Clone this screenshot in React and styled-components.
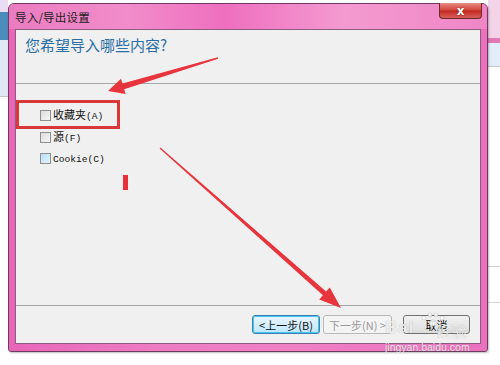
import React from "react";
import styled, { createGlobalStyle } from "styled-components";

const Global = createGlobalStyle`
  html, body { margin: 0; padding: 0; background: #fff; }
  body { font-family: "Noto Sans CJK SC", "Noto Sans", sans-serif; }
`;

const Desktop = styled.div`
  position: relative;
  width: 500px;
  height: 365px;
  overflow: hidden;
  box-sizing: border-box;
  padding: 3px 12px 13px 8px;
  background:
    linear-gradient(to bottom, #f3d3e8 0 38px, #e27ab8 38px 43px, #e3edf9 43px 66px, #c8c8c8 66px 67px, #fff 67px 266px, #d0d0d0 266px 267px, #fff 267px 302px, #d4d4d4 302px 303px, #fff 303px) right top / 12px 100% no-repeat,
    linear-gradient(to bottom, #eadcf2 0 12px, #4a8cbc 12px 40px, #dfe9f5 40px 96px, #c4c4c4 96px 97px, #fff 97px) left top / 8px 100% no-repeat,
    #fff;
`;

const Window = styled.div`
  width: 480px;
  height: 349px;
  box-sizing: border-box;
  border: 1px solid #6e3a62;
  border-radius: 6px 6px 3px 3px;
  background: linear-gradient(90deg, #e766b6 0%, #ee7cc2 30%, #f07fc4 60%, #ea72bd 100%);
  display: flex;
  flex-direction: column;
  box-shadow: 1px 1px 2px rgba(0,0,0,0.25);
`;

const TitleBar = styled.div`
  height: 25px;
  display: flex;
  align-items: center;
  justify-content: space-between;
  padding-left: 6px;
  background: linear-gradient(90deg, #ea7cc0 0%, #f28cca 25%, #ee6fbf 45%, #f49ad0 70%, #ef86c6 100%);
  border-radius: 5px 5px 0 0;
`;

const Title = styled.span`
  font-size: 11.5px;
  color: #1c1c1c;
  letter-spacing: 0.2px;
`;

const CloseButton = styled.div`
  align-self: flex-start;
  width: 43px;
  height: 16px;
  margin-right: 5px;
  margin-top: -1px;
  box-sizing: border-box;
  border: 1px solid #6a2a2a;
  border-top: none;
  border-radius: 0 0 4px 4px;
  background: linear-gradient(to bottom, #e88c84 0%, #d4483e 45%, #c02a22 55%, #d9605a 100%);
  display: flex;
  align-items: center;
  justify-content: center;
  color: #fff;
  font-family: "DejaVu Sans", sans-serif;
  font-weight: bold;
  font-size: 12px;
  line-height: 1;
  text-shadow: 0 0 2px #7a1010;
`;

const Client = styled.div`
  flex: 1;
  margin: 0 6px 7px 6px;
  border: 1px solid #8c5c7e;
  background: #f0f0f0;
  display: flex;
  flex-direction: column;
`;

const Header = styled.div`
  height: 54px;
  padding: 4px 0 0 9px;
  box-sizing: border-box;
  border-bottom: 1px solid #a8a8a8;
`;

const Heading = styled.div`
  font-size: 15px;
  color: #2a6ea5;
  line-height: 22px;
`;

const Body = styled.div`
  flex: 1;
  padding: 25px 0 0 24px;
  border-bottom: 1px solid #a4a4a4;
  display: flex;
  flex-direction: column;
  gap: 8.5px;
`;

const Row = styled.label`
  display: flex;
  align-items: center;
  gap: 2px;
  height: 13px;
`;

const Text = styled.span`
  font-size: 11px;
  line-height: 13px;
  color: #111;
  white-space: nowrap;
`;

const Box = styled.span`
  flex: none;
  width: 11px;
  height: 11px;
  box-sizing: border-box;
  border: 1px solid #8e8f8f;
  background: ${p => p.$tint ? "linear-gradient(135deg, #b8e0f4, #e4f4fc)" : "linear-gradient(135deg, #dcdcdc, #f6f6f6)"};
`;

const Latin = styled.span`
  font-family: "Liberation Mono", monospace;
  font-size: 9.6px;
`;

const Footer = styled.div`
  height: 37px;
  display: flex;
  align-items: center;
  justify-content: flex-end;
  padding-right: 10px;
  gap: 3px;
`;

const Button = styled.div`
  height: 19px;
  width: ${p => p.$w}px;
  margin-left: ${p => p.$ml || 0}px;
  box-sizing: border-box;
  border: 1px solid ${p => p.$focus ? "#3c7fb1" : p.$disabled ? "#b8b8b8" : "#707070"};
  border-radius: 3px;
  background: ${p => p.$focus
    ? "linear-gradient(to bottom, #eaf6fd, #bee6fd)"
    : p.$disabled ? "#f4f4f4" : "linear-gradient(to bottom, #f2f2f2, #dddddd)"};
  box-shadow: ${p => p.$focus ? "inset 0 0 0 1px #48c4f0" : "none"};
  display: flex;
  align-items: center;
  justify-content: center;
  font-size: 11px;
  color: ${p => p.$disabled ? "#9a9a9a" : "#111"};
`;

const Overlay = styled.svg`
  position: absolute;
  left: 0;
  top: 0;
  pointer-events: none;
`;

const Highlight = styled.div`
  position: absolute;
  left: 16px;
  top: 100px;
  width: 104px;
  height: 29px;
  box-sizing: border-box;
  border: 3px solid #d8383a;
`;

const Mark = styled.div`
  position: absolute;
  left: 123px;
  top: 175px;
  width: 5px;
  height: 15px;
  background: #e8303a;
`;

const Watermark = styled.div`
  position: absolute;
  left: ${p => p.$x}px;
  top: ${p => p.$y}px;
  font-size: ${p => p.$size}px;
  font-weight: ${p => p.$bold ? "bold" : "normal"};
  color: rgba(255,255,255,0.8);
  font-family: "Liberation Sans", "Noto Sans CJK SC", sans-serif;
  text-shadow: 0 0 1px rgba(110,110,110,0.55);
  white-space: nowrap;
  letter-spacing: ${p => p.$ls || 0}px;
`;

function arrowPoints(tx, ty, px, py, w0, w1, hl, hw) {
  const dx = px - tx, dy = py - ty;
  const len = Math.hypot(dx, dy);
  const ux = dx / len, uy = dy / len;
  const nx = -uy, ny = ux;
  const bx = px - ux * hl, by = py - uy * hl;
  const p = [
    [tx + nx * w0, ty + ny * w0],
    [bx + nx * w1, by + ny * w1],
    [bx + nx * hw, by + ny * hw],
    [px, py],
    [bx - nx * hw, by - ny * hw],
    [bx - nx * w1, by - ny * w1],
    [tx - nx * w0, ty - ny * w0],
  ];
  return p.map(q => q[0].toFixed(1) + "," + q[1].toFixed(1)).join(" ");
}

export default function App() {
  return (
    <>
      <Global />
      <Desktop>
        <Window>
          <TitleBar>
            <Title>导入/导出设置</Title>
            <CloseButton>x</CloseButton>
          </TitleBar>
          <Client>
            <Header>
              <Heading>您希望导入哪些内容?</Heading>
            </Header>
            <Body>
              <Row><Box /><Text>收藏夹<Latin>(A)</Latin></Text></Row>
              <Row><Box /><Text>源<Latin>(F)</Latin></Text></Row>
              <Row><Box $tint /><Text><Latin>Cookie(C)</Latin></Text></Row>
            </Body>
            <Footer>
              <Button $w={68} $focus>&lt;上一步(B)</Button>
              <Button $w={69} $disabled>下一步(N) &gt;</Button>
              <Button $w={67} $ml={8}>取消</Button>
            </Footer>
          </Client>
        </Window>
        <Highlight />
        <Mark />
        <Overlay width="500" height="365" viewBox="0 0 500 365">
          <polygon points={arrowPoints(218, 58, 108, 91, 0.8, 3, 16, 8)} fill="#e8343c" />
          <polygon points={arrowPoints(160, 148, 341, 308, 0.6, 2.4, 22, 8)} fill="#e8343c" />
          <g fill="rgba(255,255,255,0.8)" stroke="rgba(120,120,120,0.5)" strokeWidth="0.5">
            <circle cx="424" cy="318" r="2" />
            <circle cx="430" cy="315" r="2" />
            <circle cx="436" cy="315" r="2" />
            <circle cx="442" cy="318" r="2" />
            <ellipse cx="433" cy="323" rx="4" ry="3" />
          </g>
        </Overlay>
        <Watermark $x={385} $y={318} $size={17} $bold $ls={1}>Bai</Watermark>
        <Watermark $x={437} $y={320} $size={15}>经验</Watermark>
        <Watermark $x={385} $y={341} $size={10.5}>jingyan.baidu.com</Watermark>
      </Desktop>
    </>
  );
}
